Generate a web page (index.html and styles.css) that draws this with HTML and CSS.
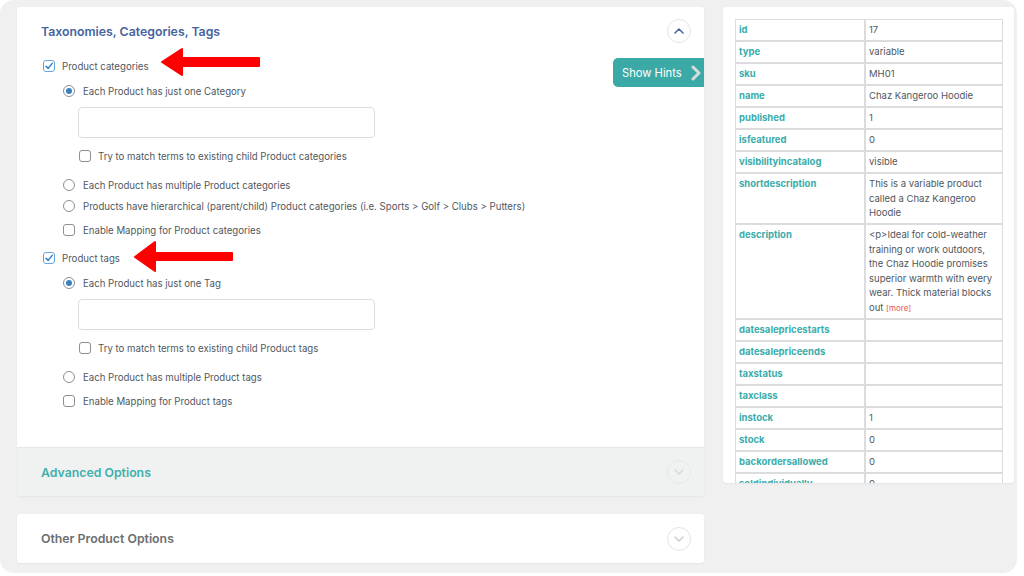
FILE: index.html
```html
<!DOCTYPE html>
<html lang="en">

<head>
  <meta charset="UTF-8" />
  <meta name="viewport" content="width=device-width, initial-scale=1.0" />
  <title>Import products - Taxonomies</title>
  <link rel="stylesheet" href="styles.css">
</head>

<body>
  <div class="frame">
    <div class="main">
      <div class="card">
        <section class="panel">
          <div class="panel-head">
            <h2>Taxonomies, Categories, Tags</h2>
            <span class="toggle">
              <svg width="10" height="6" viewBox="0 0 10 6"><path d="M1 5 L5 1 L9 5" fill="none" stroke="#4b67a1" stroke-width="1.6" stroke-linecap="round" stroke-linejoin="round"/></svg>
            </span>
          </div>

          <div class="panel-body">
            <!-- Categories -->
            <div class="field">
              <label class="opt"><span class="box on"><svg width="10" height="10" viewBox="0 0 10 10"><path d="M2 5.2 L4.2 7.4 L8.2 2.4" fill="none" stroke="#2f7dc4" stroke-width="1.5" stroke-linecap="round" stroke-linejoin="round"/></svg></span>Product categories</label>
              <div class="sub">
                <label class="opt"><span class="dot on"></span>Each Product has just one Category</label>
                <input class="term" type="text">
                <label class="opt match"><span class="box"></span>Try to match terms to existing child Product categories</label>
                <label class="opt spaced"><span class="dot"></span>Each Product has multiple Product categories</label>
                <label class="opt tight"><span class="dot"></span>Products have hierarchical (parent/child) Product categories (i.e. Sports &gt; Golf &gt; Clubs &gt; Putters)</label>
                <label class="opt mapping"><span class="box"></span>Enable Mapping for Product categories</label>
              </div>
            </div>

            <!-- Tags -->
            <div class="field">
              <label class="opt"><span class="box on"><svg width="10" height="10" viewBox="0 0 10 10"><path d="M2 5.2 L4.2 7.4 L8.2 2.4" fill="none" stroke="#2f7dc4" stroke-width="1.5" stroke-linecap="round" stroke-linejoin="round"/></svg></span>Product tags</label>
              <div class="sub">
                <label class="opt"><span class="dot on"></span>Each Product has just one Tag</label>
                <input class="term" type="text">
                <label class="opt match"><span class="box"></span>Try to match terms to existing child Product tags</label>
                <label class="opt spaced"><span class="dot"></span>Each Product has multiple Product tags</label>
                <label class="opt mapping"><span class="box"></span>Enable Mapping for Product tags</label>
              </div>
            </div>
          </div>

          <a class="hints" href="#">Show Hints
            <svg width="12" height="16" viewBox="0 0 12 16"><path d="M3 2 L9 8 L3 14" fill="none" stroke="#d9dcdc" stroke-width="3" stroke-linecap="round" stroke-linejoin="round"/></svg>
          </a>

          <svg class="arrow first" width="100" height="30" viewBox="0 0 100 30"><path d="M2 15 L22 2 L22 11 L99 11 L99 19 L22 19 L22 28 Z" fill="#f00" stroke="#f00" stroke-width="2" stroke-linejoin="round"/></svg>
          <svg class="arrow second" width="100" height="32" viewBox="0 0 100 32"><path d="M2 17 L22 2 L22 13 L99 13 L99 20 L22 20 L22 31 Z" fill="#f00" stroke="#f00" stroke-width="2" stroke-linejoin="round"/></svg>
        </section>

        <div class="panel-head muted">
          <h2>Advanced Options</h2>
          <span class="toggle faint">
            <svg width="10" height="6" viewBox="0 0 10 6"><path d="M1 1 L5 5 L9 1" fill="none" stroke="#d4d6d8" stroke-width="1.4" stroke-linecap="round" stroke-linejoin="round"/></svg>
          </span>
        </div>
      </div>

      <div class="card">
        <div class="panel-head plain">
          <h2>Other Product Options</h2>
          <span class="toggle">
            <svg width="10" height="6" viewBox="0 0 10 6"><path d="M1 1 L5 5 L9 1" fill="none" stroke="#c8cacc" stroke-width="1.4" stroke-linecap="round" stroke-linejoin="round"/></svg>
          </span>
        </div>
      </div>
    </div>

    <!-- Vista previa del registro -->
    <aside class="side">
      <table class="record">
        <tr><th>id</th><td>17</td></tr>
        <tr><th>type</th><td>variable</td></tr>
        <tr><th>sku</th><td>MH01</td></tr>
        <tr><th>name</th><td>Chaz Kangeroo Hoodie</td></tr>
        <tr><th>published</th><td>1</td></tr>
        <tr><th>isfeatured</th><td>0</td></tr>
        <tr><th>visibilityincatalog</th><td>visible</td></tr>
        <tr><th>shortdescription</th><td>This is a variable product<br>called a Chaz Kangeroo<br>Hoodie</td></tr>
        <tr><th>description</th><td>&lt;p&gt;Ideal for cold-weather<br>training or work outdoors,<br>the Chaz Hoodie promises<br>superior warmth with every<br>wear. Thick material blocks<br>out <a class="more" href="#">[more]</a></td></tr>
        <tr><th>datesalepricestarts</th><td></td></tr>
        <tr><th>datesalepriceends</th><td></td></tr>
        <tr><th>taxstatus</th><td></td></tr>
        <tr><th>taxclass</th><td></td></tr>
        <tr><th>instock</th><td>1</td></tr>
        <tr><th>stock</th><td>0</td></tr>
        <tr><th>backordersallowed</th><td>0</td></tr>
        <tr><th>soldindividually</th><td>0</td></tr>
      </table>
    </aside>
  </div>
</body>

</html>
```

FILE: styles.css
```css
* {
  box-sizing: border-box;
}

html,
body {
  margin: 0;
  padding: 0;
  background: #fff;
}

body {
  font-family: Inter, 'Open Sans', sans-serif;
  color: #50575e;
}

.frame {
  display: flex;
  gap: 19px;
  width: 1017px;
  height: 573px;
  padding: 7px 0 0 17px;
  background: #f0f0f1;
  border-radius: 14px;
}

.main {
  display: flex;
  flex-direction: column;
  gap: 18px;
  width: 687px;
}

.card {
  background: #fff;
  border-radius: 3px;
  box-shadow: 0 1px 2px rgba(0, 0, 0, 0.05);
  overflow: hidden;
}

.panel {
  position: relative;
}

.panel-head {
  display: flex;
  align-items: center;
  justify-content: space-between;
  height: 48px;
  padding: 0 13px 0 24px;
}

.panel-head h2 {
  margin: 0;
  font-size: 12.3px;
  font-weight: 600;
  color: #46639e;
}

.panel-head.muted {
  height: 49px;
  background: #f0f1f1;
  border-top: 1px solid #e4e6e8;
}

.panel-head.muted h2 {
  color: #3fb0ac;
}

.panel-head.plain {
  height: 49px;
}

.panel-head.plain h2 {
  color: #6b6e70;
}

.toggle {
  display: grid;
  place-items: center;
  width: 24px;
  height: 24px;
  border: 1px solid #e2e4e7;
  border-radius: 50%;
}

.toggle.faint {
  border-color: #e6e8e9;
}

.panel-body {
  padding: 1px 24px 36px 26px;
}

.field + .field {
  margin-top: 8px;
}

.opt {
  display: flex;
  align-items: center;
  gap: 7px;
  height: 20px;
  font-size: 9.65px;
  white-space: nowrap;
}

.sub {
  padding-left: 20px;
}

.sub > .opt {
  gap: 8px;
}

.sub > .opt:first-child {
  margin-top: 5px;
}

.term {
  display: block;
  width: 297px;
  height: 31px;
  margin: 6px 0 0 15px;
  border: 1px solid #dcdcde;
  border-radius: 4px;
  background: #fff;
}

.opt.match {
  margin: 8px 0 0 16px;
  gap: 7px;
}

.opt.spaced {
  margin-top: 9px;
}

.opt.tight {
  margin-top: 1px;
}

.opt.mapping {
  margin-top: 4px;
}

.box,
.dot {
  display: grid;
  place-items: center;
  flex: none;
  width: 12px;
  height: 12px;
  border: 1px solid #8c8f94;
  background: #fff;
}

.box {
  border-radius: 3px;
}

.box.on {
  border-color: #6aa5dc;
}

.dot {
  border-radius: 50%;
}

.dot.on::after {
  content: '';
  width: 6px;
  height: 6px;
  border-radius: 50%;
  background: #3582c4;
}

.hints {
  position: absolute;
  top: 51px;
  right: 0;
  display: flex;
  align-items: center;
  gap: 8px;
  width: 91px;
  height: 29px;
  padding-left: 9px;
  background: #3ba9a6;
  border-radius: 5px 0 0 5px;
  color: #fff;
  font-size: 11.2px;
  text-decoration: none;
}

.arrow {
  position: absolute;
}

.arrow.first {
  left: 143px;
  top: 40px;
}

.arrow.second {
  left: 116px;
  top: 233px;
}

/* Registro de ejemplo */
.side {
  width: 291px;
  height: 476px;
  padding: 12px 11px 0 12px;
  background: #fff;
  border-radius: 4px;
  box-shadow: 0 1px 2px rgba(0, 0, 0, 0.05);
  overflow: hidden;
}

.record {
  width: 268px;
  border-collapse: separate;
  border-spacing: 0;
  font-size: 9.5px;
  table-layout: fixed;
}

.record th,
.record td {
  padding: 3px 3px 2.5px;
  line-height: 14.5px;
  border: 1px solid #dcdcde;
  vertical-align: top;
  text-align: left;
  white-space: nowrap;
}

.record th {
  width: 130px;
  font-weight: 700;
  color: #3aacac;
}

.record td {
  color: #50575e;
}

.more {
  color: #e8564f;
  font-size: 8px;
  text-decoration: none;
}
```
